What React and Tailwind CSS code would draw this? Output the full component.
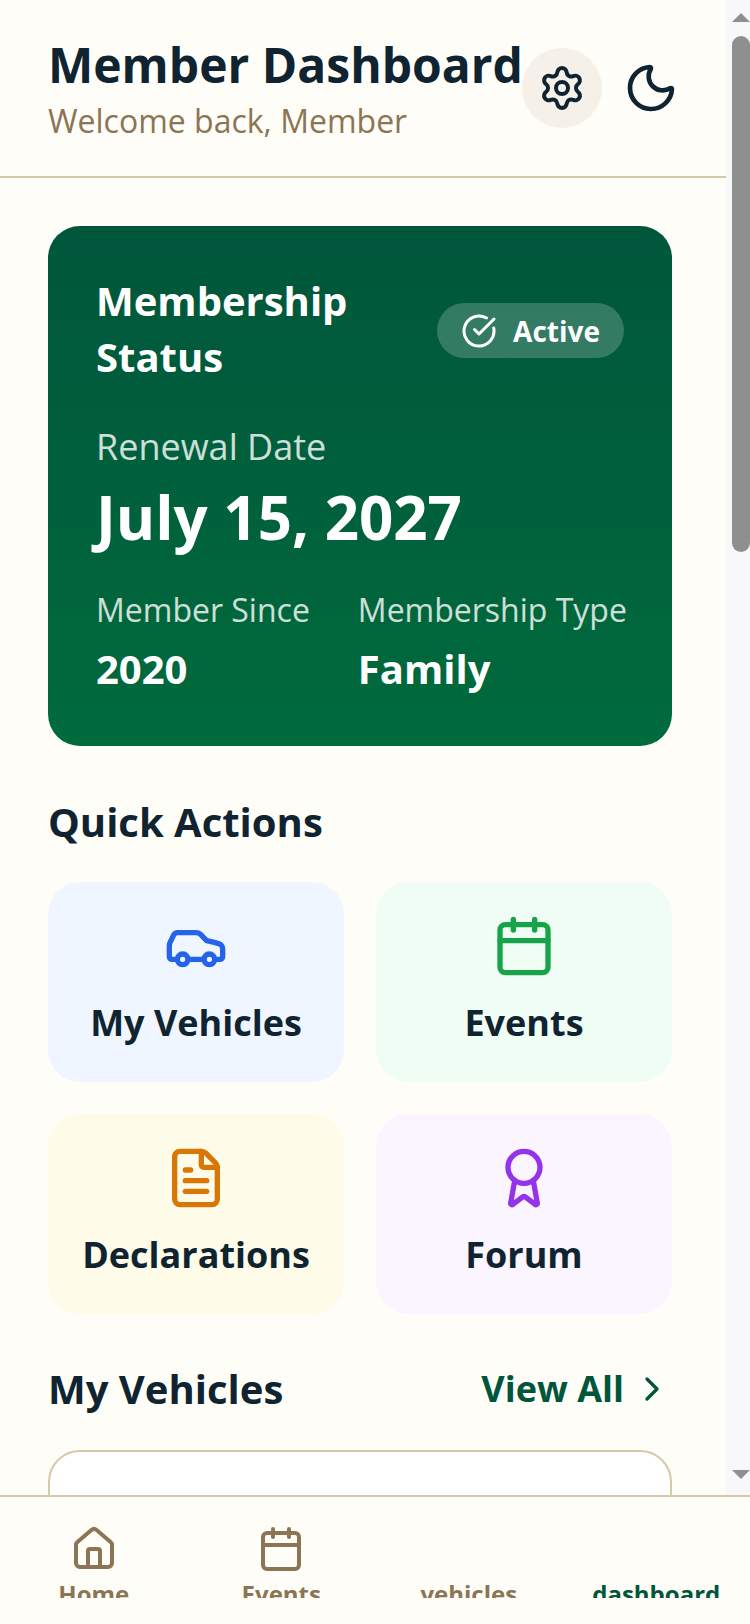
import { Award, Calendar, Car, ChevronRight, CircleCheckBig, FileText, House, Moon, Settings } from 'lucide-react'

const actions = [
  { label: 'My Vehicles', icon: Car, bg: 'bg-[#eff6ff]', color: 'text-[#2563eb]' },
  { label: 'Events', icon: Calendar, bg: 'bg-[#f0fdf4]', color: 'text-[#16a34a]' },
  { label: 'Declarations', icon: FileText, bg: 'bg-[#fefce8]', color: 'text-[#d97706]' },
  { label: 'Forum', icon: Award, bg: 'bg-[#faf5ff]', color: 'text-[#9333ea]' },
]

const navItems = [
  { label: 'Home', icon: House },
  { label: 'Events', icon: Calendar },
  { label: 'vehicles' },
  { label: 'dashboard', active: true },
]

function Scrollbar() {
  return (
    <div className="flex w-6 shrink-0 flex-col items-end bg-[#f8f8fb]">
      <div className="mt-[13px] h-0 w-0 border-x-[9px] border-b-[9px] border-x-transparent border-b-[#8f8f8f]" />
      <div className="mt-[14px] h-[516px] w-[18px] rounded-full bg-[#8f8f8f]" />
      <div className="mt-auto mb-[16px] h-0 w-0 border-x-[9px] border-t-[9px] border-x-transparent border-t-[#8f8f8f]" />
    </div>
  )
}

export default function App() {
  return (
    <div className="flex h-[1624px] w-[750px] flex-col overflow-hidden bg-[#fffdf8] font-['Open_Sans',sans-serif] text-[#0f2430]">
      <div className="flex min-h-0 flex-1">
        <main className="min-w-0 flex-1 overflow-hidden">
          <header className="flex h-[178px] items-start border-b-2 border-[#d4c9a8] pt-[33px] pl-[48px]">
            <div className="w-[474px] shrink-0">
              <h1 className="text-[48px] leading-[64px] font-bold whitespace-nowrap">Member Dashboard</h1>
              <p className="text-[32px] leading-[48px] text-[#8b7555]">Welcome back, Member</p>
            </div>
            <div className="mt-[15px] flex items-center gap-[21px]">
              <button type="button" className="flex h-[80px] w-[80px] shrink-0 items-center justify-center rounded-full bg-[#f5f1e8]">
                <Settings size={48} strokeWidth={2} />
              </button>
              <button type="button" className="flex h-[80px] w-[56px] shrink-0 items-center justify-center">
                <Moon size={56} strokeWidth={2} />
              </button>
            </div>
          </header>

          <div className="pt-[48px] pr-[54px] pl-[48px]">
            <section className="h-[520px] rounded-[32px] bg-gradient-to-b from-[#00563b] to-[#006b3c] px-[48px] pt-[47px] text-white">
              <div className="flex items-center justify-between">
                <h2 className="w-[280px] text-[40px] leading-[56px] font-bold">Membership Status</h2>
                <span className="mt-[3px] flex h-[55px] items-center gap-[16px] rounded-full bg-white/20 px-[24px] text-[28px] font-bold">
                  <CircleCheckBig size={36} />
                  Active
                </span>
              </div>
              <p className="mt-[36px] text-[36px] leading-[52px] text-white/80">Renewal Date</p>
              <p className="mt-[7px] text-[60px] leading-[75px] font-bold">July 15, 2027</p>
              <div className="mt-[35px] flex gap-[48px]">
                <div>
                  <p className="text-[32px] leading-[40px] whitespace-nowrap text-white/80">Member Since</p>
                  <p className="mt-[11px] text-[40px] leading-[56px] font-bold">2020</p>
                </div>
                <div>
                  <p className="text-[32px] leading-[40px] whitespace-nowrap text-white/80">Membership Type</p>
                  <p className="mt-[11px] text-[40px] leading-[56px] font-bold">Family</p>
                </div>
              </div>
            </section>

            <h2 className="mt-[48px] text-[40px] leading-[56px] font-bold">Quick Actions</h2>
            <div className="mt-[32px] grid grid-cols-2 gap-[32px]">
              {actions.map(({ label, icon: Icon, bg, color }) => (
                <button key={label} type="button" className={`flex h-[200px] flex-col items-center rounded-[32px] pt-[32px] ${bg}`}>
                  <Icon size={64} strokeWidth={2} className={color} />
                  <span className="mt-[17px] text-[36px] leading-[56px] font-bold">{label}</span>
                </button>
              ))}
            </div>

            <div className="mt-[47px] flex items-center justify-between">
              <h2 className="text-[40px] leading-[56px] font-bold">My Vehicles</h2>
              <button type="button" className="flex items-center gap-[8px] text-[36px] font-bold text-[#00563b]">
                View All
                <ChevronRight size={40} />
              </button>
            </div>
            <div className="mt-[33px] h-[300px] rounded-[32px] border-2 border-[#d4c9a8] bg-white" />
          </div>
        </main>
        <Scrollbar />
      </div>

      <nav className="grid h-[129px] shrink-0 grid-cols-4 border-t-2 border-[#d4c9a8] bg-[#fffdf8]">
        {navItems.map(({ label, icon: Icon, active }) => (
          <div key={label} className={`flex h-[101px] flex-col items-center overflow-hidden pt-[28px] ${active ? 'text-[#00563b]' : 'text-[#8b7555]'}`}>
            <div className="h-[48px] w-[48px] shrink-0">{Icon && <Icon size={48} strokeWidth={2} />}</div>
            <span className="mt-[5px] shrink-0 text-[24px] leading-[32px] font-bold">{label}</span>
          </div>
        ))}
      </nav>
    </div>
  )
}
